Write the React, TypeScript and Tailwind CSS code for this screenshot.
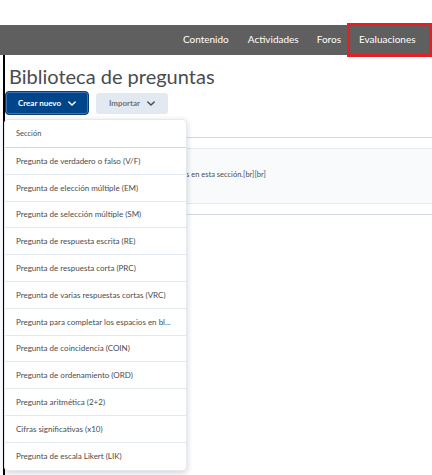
import React from "react";

const navItems = [
  { label: "Contenido", gap: "mr-[19px]" },
  { label: "Actividades", gap: "mr-[18px]" },
  { label: "Foros", gap: "mr-[6px]" },
];

const menuItems = [
  "Pregunta de verdadero o falso (V/F)",
  "Pregunta de elección múltiple (EM)",
  "Pregunta de selección múltiple (SM)",
  "Pregunta de respuesta escrita (RE)",
  "Pregunta de respuesta corta (PRC)",
  "Pregunta de varias respuestas cortas (VRC)",
  "Pregunta para completar los espacios en bl...",
  "Pregunta de coincidencia (COIN)",
  "Pregunta de ordenamiento (ORD)",
  "Pregunta aritmética (2+2)",
  "Cifras significativas (x10)",
  "Pregunta de escala Likert (LIK)",
];

const Chevron = ({ className }: { className?: string }) => (
  <svg viewBox="0 0 10 6" className={className} fill="none" stroke="currentColor" strokeWidth="1.8" strokeLinecap="round" strokeLinejoin="round">
    <path d="M1 1l4 4 4-4" />
  </svg>
);

export default function App() {
  return (
    <div className="relative h-[475px] w-[432px] overflow-hidden bg-white font-['Lato',sans-serif] text-[#494c4e]">
      <div className="h-[25px]" />
      <nav className="flex h-[30px] items-center justify-end bg-[#5f5f5f] pb-[2px] text-[10px] text-white">
        {navItems.map((item) => (
          <span key={item.label} className={item.gap}>
            {item.label}
          </span>
        ))}
        <span className="-mb-[4px] -mt-[2px] flex h-[34px] w-[85px] items-center border-[3px] border-[#e41f26] pb-[2px] pl-[9px]">
          Evaluaciones
        </span>
      </nav>

      <main className="ml-[3px] h-[420px] border-l-2 border-black pt-[8px]">
        <h1 className="pl-[4px] text-[20px] leading-[26px] text-[#494c4e]">Biblioteca de preguntas</h1>
        <div className="mt-[2px] flex items-center gap-[7px]">
          <button className="flex h-[24px] w-[84px] items-center justify-center gap-[7px] rounded-[4px] border border-[#0b3d70] bg-[#004489] text-[8px] font-bold text-white shadow-[inset_0_0_0_1px_#3b74b8]">
            Crear nuevo
            <Chevron className="h-[5px] w-[8px]" />
          </button>
          <button className="flex h-[21px] w-[72px] items-center justify-center gap-[7px] rounded-[3px] bg-[#e3e9f1] text-[8px] font-bold text-[#6e7376]">
            Importar
            <Chevron className="h-[5px] w-[8px] text-[#494c4e]" />
          </button>
        </div>

        <div className="mt-[22px] border-t border-[#d3d9e3]" />
        <div className="mt-[10px] flex h-[56px] items-center border-y border-[#e3e9f1] bg-[#f9fafc] pb-[3px] pl-[181px] text-[7.5px]">
          s en esta sección.[br]
          <span className="text-[#006fbf]">[</span>br]
        </div>
        <div className="mt-[10px] border-t border-[#d3d9e3]" />
      </main>

      <ul className="absolute left-[4px] top-[119px] w-[183px] rounded-[4px] border border-[#e3e9f1] bg-white text-[8px] shadow-[0_2px_6px_rgba(0,0,0,0.18)]">
        <li className="flex h-[28px] items-center border-b border-[#d3d9e3] pl-[11px] text-[7.5px]">Sección</li>
        {menuItems.map((item, i) => (
          <li
            key={item}
            className={
              "flex h-[26.8px] items-center pl-[11px] " +
              (i < menuItems.length - 1 ? "border-b border-[#e3e9f1]" : "")
            }
          >
            {item}
          </li>
        ))}
      </ul>
    </div>
  );
}
